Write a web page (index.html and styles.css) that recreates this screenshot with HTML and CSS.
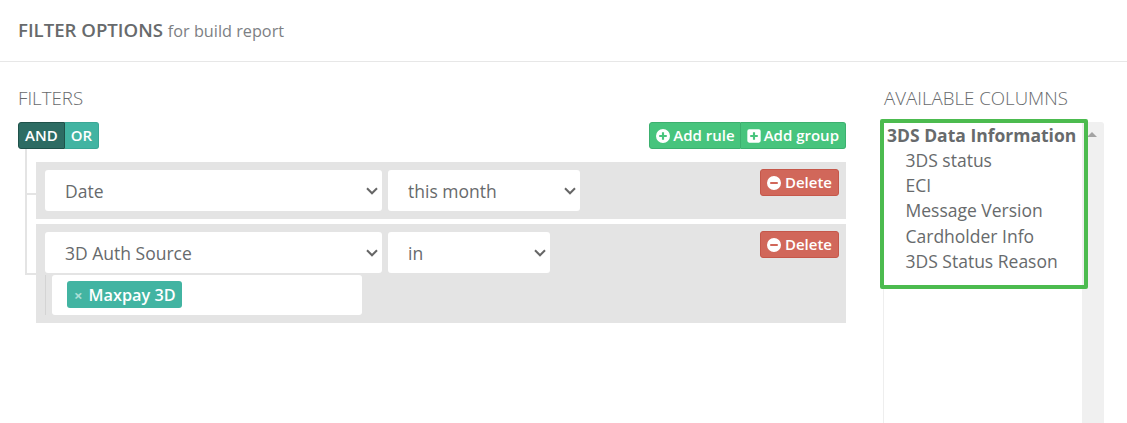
FILE: index.html
```html
<!DOCTYPE html>
<html lang="en">
<head>
    <meta charset="UTF-8">
    <meta name="viewport" content="width=device-width, initial-scale=1.0">
    <title>Filter options</title>
    <link rel="stylesheet" href="styles.css">
</head>
<body>
    <header class="page-head">
        <h1>FILTER OPTIONS <small>for build report</small></h1>
    </header>

    <main class="content">
        <section class="filters">
            <h2>FILTERS</h2>

            <div class="group-head">
                <div class="btn-group">
                    <button class="btn btn-teal active" type="button">AND</button>
                    <button class="btn btn-teal" type="button">OR</button>
                </div>
                <div class="btn-group">
                    <button class="btn btn-green" type="button">
                        <svg class="icon" viewBox="0.5 0.5 13 13"><path fill-rule="evenodd" d="M7 .5a6.5 6.5 0 1 1 0 13 6.5 6.5 0 0 1 0-13zM6 3.5v2.500H3.500v2H6v2.500h2V8h2.500V6H8V3.500z"/></svg>
                        Add rule
                    </button>
                    <button class="btn btn-green" type="button">
                        <svg class="icon" viewBox="0.5 0.5 13 13"><path fill-rule="evenodd" d="M2.500 .8h9a1.700 1.700 0 0 1 1.700 1.700v9a1.700 1.700 0 0 1-1.700 1.700h-9A1.700 1.700 0 0 1 .8 11.500v-9A1.700 1.700 0 0 1 2.500 .8zM6 3.500V6H3.500v2H6v2.500h2V8h2.500V6H8V3.500z"/></svg>
                        Add group
                    </button>
                </div>
            </div>

            <div class="rules">
                <div class="rule">
                    <div class="rule-row">
                        <select class="field field-name"><option>Date</option></select>
                        <select class="field field-wide"><option>this month</option></select>
                        <button class="btn btn-red" type="button">
                            <svg class="icon" viewBox="0.5 0.5 13 13"><path fill-rule="evenodd" d="M7 .5a6.500 6.500 0 1 1 0 13 6.500 6.500 0 0 1 0-13zM3.500 6v2h7V6z"/></svg>
                            Delete
                        </button>
                    </div>
                </div>
                <div class="rule">
                    <div class="rule-row">
                        <select class="field field-name"><option>3D Auth Source</option></select>
                        <select class="field field-short"><option>in</option></select>
                        <button class="btn btn-red" type="button">
                            <svg class="icon" viewBox="0.5 0.5 13 13"><path fill-rule="evenodd" d="M7 .5a6.500 6.500 0 1 1 0 13 6.500 6.500 0 0 1 0-13zM3.500 6v2h7V6z"/></svg>
                            Delete
                        </button>
                    </div>
                    <div class="tag-wrap">
                        <div class="tag-input">
                            <span class="tag"><span class="tag-x">×</span>Maxpay 3D</span>
                        </div>
                    </div>
                </div>
            </div>
        </section>

        <aside class="columns">
            <h2>AVAILABLE COLUMNS</h2>
            <div class="column-box">
                <div class="column-list">
                    <div class="column-group">3DS Data Information</div>
                    <div class="column-item">3DS status</div>
                    <div class="column-item">ECI</div>
                    <div class="column-item">Message Version</div>
                    <div class="column-item">Cardholder Info</div>
                    <div class="column-item">3DS Status Reason</div>
                </div>
                <div class="scrollbar"><span class="scroll-up"></span></div>
                <div class="highlight"></div>
            </div>
        </aside>
    </main>
</body>
</html>
```

FILE: styles.css
```css
* {
    box-sizing: border-box;
}
html, body {
    height: 423px;
    overflow: hidden;
}
body {
    margin: 0;
    font-family: 'Open Sans', sans-serif;
    background-color: #fff;
    color: #676a6c;
}
.page-head {
    height: 62px;
    padding: 19px 18px 0;
    border-bottom: 1px solid #e7e7e7;
}
h1 {
    margin: 0;
    font-size: 18.600px;
    line-height: 22px;
    font-weight: 600;
    color: #676a6c;
}
h1 small {
    font-size: 16.250px;
    font-weight: 400;
    color: #7d8084;
}
h2 {
    margin: 0;
    font-size: 18.700px;
    line-height: 22px;
    font-weight: 300;
    color: #676a6c;
}
.content {
    display: flex;
    padding: 25px 23px 0 18px;
}
.filters {
    width: 828px;
}
.group-head {
    display: flex;
    justify-content: space-between;
    margin-top: 13px;
}
.btn-group {
    display: flex;
}
.btn {
    display: flex;
    align-items: center;
    gap: 3px;
    height: 27px;
    padding: 0 6px 2px;
    border: 1px solid;
    border-radius: 3px;
    font-family: inherit;
    font-size: 15px;
    font-weight: 600;
    color: #fff;
    white-space: nowrap;
}
.btn-group .btn:first-child {
    border-top-right-radius: 0;
    border-bottom-right-radius: 0;
}
.btn-group .btn:last-child {
    border-top-left-radius: 0;
    border-bottom-left-radius: 0;
    border-left: 0;
}
.btn-teal {
    background-color: #42b4a2;
    border-color: #3ba796;
}
.btn-teal.active {
    background-color: #2d6c63;
    border-color: #1f524a;
    border-right-color: #1f524a;
}
.btn-green {
    background-color: #47c47d;
    border-color: #3cb06f;
}
.btn-green:first-child {
    padding-right: 5px;
}
.btn-red {
    background-color: #d1675a;
    border-color: #c5574a;
    gap: 4px;
    margin-left: auto;
    margin-top: -1px;
}
.icon {
    width: 14px;
    height: 14px;
    fill: #fff;
    flex: none;
    margin-top: 2px;
}
.rules {
    position: relative;
    margin-top: 13px;
    padding-left: 18px;
}
.rules::before {
    content: "";
    position: absolute;
    left: 7px;
    top: -13px;
    width: 11px;
    height: 124px;
    border-left: 2px solid #e4e4e4;
    border-bottom: 2px solid #e4e4e4;
}
.rule {
    position: relative;
    padding: 8px 7px 8px 9px;
    background-color: #e4e4e4;
    margin-bottom: 5px;
}
.rule:first-child::before {
    content: "";
    position: absolute;
    left: -9px;
    top: 31px;
    width: 9px;
    border-top: 2px solid #e4e4e4;
}
.rule-row {
    display: flex;
    gap: 6px;
}
.field {
    height: 41px;
    padding: 0 24px 0 20px;
    border: 0;
    border-radius: 3px;
    appearance: none;
    background: #fff url("data:image/svg+xml,%3Csvg xmlns='http://www.w3.org/2000/svg' width='12' height='8'%3E%3Cpath d='M1 1.300l5 5 5-5' fill='none' stroke='%23666' stroke-width='2'/%3E%3C/svg%3E") no-repeat right 4px center;
    font-family: inherit;
    font-size: 17.500px;
    color: #676a6c;
}
.field-name {
    width: 337px;
}
.field-wide {
    width: 192px;
}
.field-short {
    width: 162px;
}
.tag-wrap {
    margin-top: 2px;
    padding-left: 6px;
    border-left: 1px solid #d4d4d4;
}
.tag-input {
    width: 310px;
    height: 40px;
    padding: 6px 15px;
    border-radius: 3px;
    background-color: #fff;
}
.tag {
    display: inline-flex;
    align-items: center;
    height: 27px;
    padding: 0 6px 0 7px;
    border-radius: 3px;
    background-color: #42b4a2;
    font-size: 16.250px;
    font-weight: 600;
    color: #fff;
}
.tag-x {
    margin-right: 6px;
    font-size: 15px;
    font-weight: 700;
    color: #a9dfd6;
}
.columns {
    margin-left: 38px;
    width: 220px;
}
.column-box {
    position: relative;
    display: flex;
    margin: 13px 0 0 -1px;
    height: 302px;
    border-left: 1px solid #eee;
}
.column-list {
    width: 198px;
    padding: 0.800px 0 0 3px;
    font-size: 17.500px;
    line-height: 25.200px;
}
.column-group {
    font-weight: 700;
    white-space: nowrap;
}
.column-item {
    padding-left: 18.500px;
    white-space: nowrap;
}
.scrollbar {
    width: 22px;
    background-color: #f0f0f0;
    border-top-right-radius: 3px;
}
.scroll-up {
    display: block;
    width: 0;
    margin: 10px 0 0 5px;
    border-left: 5px solid transparent;
    border-right: 5px solid transparent;
    border-bottom: 5px solid #a3a3a3;
}
.highlight {
    position: absolute;
    left: -4px;
    top: -3px;
    width: 208px;
    height: 170px;
    border: 4px solid #4cbb4f;
    border-radius: 2px;
}
```
